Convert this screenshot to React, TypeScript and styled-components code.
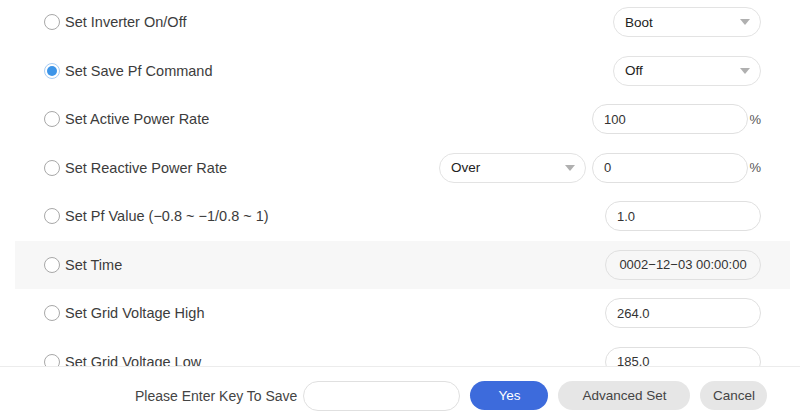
import React, { useState } from "react";
import styled, { createGlobalStyle } from "styled-components";

const GlobalStyle = createGlobalStyle`
  html, body {
    margin: 0;
    padding: 0;
    background: #fff;
    font-family: "Liberation Sans", Arial, sans-serif;
    color: #333;
  }
  * { box-sizing: border-box; }
`;

// ─── Styled Components ────────────────────────────────────────────────────────

const Page = styled.div`
  width: 800px;
  height: 418px;
  display: flex;
  flex-direction: column;
  overflow: hidden;
`;

const ScrollArea = styled.div`
  height: 366px;
  flex-shrink: 0;
  overflow: hidden;
  padding: 0 10px 0 15px;
`;

const List = styled.div`
  margin-top: -2px;
  display: flex;
  flex-direction: column;
`;

const Row = styled.div<{ $shaded?: boolean }>`
  height: 48.5px;
  flex-shrink: 0;
  display: flex;
  align-items: center;
  padding: 0 29px;
  background: ${(p) => (p.$shaded ? "#f7f7f7" : "transparent")};
`;

const Label = styled.label`
  flex: 1;
  display: flex;
  align-items: center;
  gap: 5px;
  font-size: 14.5px;
  color: #3c3c3c;
  cursor: pointer;
  white-space: nowrap;
`;

const Radio = styled.span<{ $checked?: boolean }>`
  width: 16px;
  height: 16px;
  border-radius: 50%;
  border: 1.5px solid ${(p) => (p.$checked ? "#a9cdf3" : "#a8a8a8")};
  background: #fff;
  display: flex;
  align-items: center;
  justify-content: center;

  &::after {
    content: "";
    width: 10px;
    height: 10px;
    border-radius: 50%;
    background: #3d95e8;
    display: ${(p) => (p.$checked ? "block" : "none")};
  }
`;

const Controls = styled.div`
  display: flex;
  align-items: center;
  gap: 6px;
`;

const Select = styled.div<{ $width: number }>`
  width: ${(p) => p.$width}px;
  height: 30px;
  border: 1px solid #e3e3e3;
  border-radius: 15px;
  background: #fff;
  display: flex;
  align-items: center;
  justify-content: space-between;
  padding: 0 10px 0 11px;
  font-size: 13.5px;
  color: #222;
`;

const Caret = styled.span`
  width: 0;
  height: 0;
  border-left: 5.5px solid transparent;
  border-right: 5.5px solid transparent;
  border-top: 6px solid #b0b0b0;
`;

const Field = styled.div<{ $centered?: boolean; $muted?: boolean }>`
  width: 156px;
  height: 30px;
  border: 1px solid #e0e0e0;
  border-radius: 15px;
  background: ${(p) => (p.$muted ? "#f7f7f7" : "#fff")};
  display: flex;
  align-items: center;
  justify-content: ${(p) => (p.$centered ? "center" : "flex-start")};
  padding: 0 11px;
  font-size: 13px;
  color: #333;
`;

const Unit = styled.span`
  width: 13px;
  margin-left: -6px;
  font-size: 13px;
  color: #555;
  text-align: right;
`;

const Footer = styled.div`
  flex: 1;
  border-top: 1px solid #ececec;
  display: flex;
  align-items: center;
  padding: 6px 33px 0 135px;
  gap: 10px;
`;

const FooterLabel = styled.span`
  flex-shrink: 0;
  white-space: nowrap;
  font-size: 14px;
  color: #444;
  margin-right: -4px;
`;

const KeyInput = styled.input`
  flex-shrink: 0;
  width: 157px;
  height: 30px;
  border: 1px solid #e0e0e0;
  border-radius: 15px;
  outline: none;
  padding: 0 12px;
  font-family: inherit;
`;

const Button = styled.button<{ $primary?: boolean; $width: number }>`
  flex-shrink: 0;
  width: ${(p) => p.$width}px;
  height: 29px;
  border: none;
  border-radius: 15px;
  background: ${(p) => (p.$primary ? "#3d6bdc" : "#e6e6e6")};
  color: ${(p) => (p.$primary ? "#fff" : "#444")};
  font-family: "Liberation Sans", Arial, sans-serif;
  font-size: 13.5px;
  cursor: pointer;
`;

// ─── Data ─────────────────────────────────────────────────────────────────────

type Control =
  | { kind: "select"; value: string; width: number }
  | { kind: "field"; value: string; unit?: boolean; centered?: boolean; muted?: boolean };

interface Item {
  label: string;
  controls: Control[];
  shaded?: boolean;
}

const items: Item[] = [
  { label: "Set Inverter On/Off", controls: [{ kind: "select", value: "Boot", width: 148 }] },
  { label: "Set Save Pf Command", controls: [{ kind: "select", value: "Off", width: 148 }] },
  { label: "Set Active Power Rate", controls: [{ kind: "field", value: "100", unit: true }] },
  {
    label: "Set Reactive Power Rate",
    controls: [
      { kind: "select", value: "Over", width: 147 },
      { kind: "field", value: "0", unit: true },
    ],
  },
  { label: "Set Pf Value (−0.8 ~ −1/0.8 ~ 1)", controls: [{ kind: "field", value: "1.0" }] },
  {
    label: "Set Time",
    shaded: true,
    controls: [{ kind: "field", value: "0002−12−03 00:00:00", centered: true, muted: true }],
  },
  { label: "Set Grid Voltage High", controls: [{ kind: "field", value: "264.0" }] },
  { label: "Set Grid Voltage Low", controls: [{ kind: "field", value: "185.0" }] },
];

// ─── Component ────────────────────────────────────────────────────────────────

export default function App() {
  const [selected, setSelected] = useState(1);

  return (
    <>
      <GlobalStyle />
      <Page>
        <ScrollArea>
          <List>
            {items.map((item, i) => (
              <Row key={item.label} $shaded={item.shaded}>
                <Label onClick={() => setSelected(i)}>
                  <Radio $checked={selected === i} />
                  {item.label}
                </Label>
                <Controls>
                  {item.controls.map((c, j) =>
                    c.kind === "select" ? (
                      <Select key={j} $width={c.width}>
                        {c.value}
                        <Caret />
                      </Select>
                    ) : (
                      <React.Fragment key={j}>
                        <Field $centered={c.centered} $muted={c.muted}>
                          {c.value}
                        </Field>
                        {c.unit && <Unit>%</Unit>}
                      </React.Fragment>
                    )
                  )}
                </Controls>
              </Row>
            ))}
          </List>
        </ScrollArea>

        <Footer>
          <FooterLabel>Please Enter Key To Save</FooterLabel>
          <KeyInput />
          <Button $primary $width={78}>Yes</Button>
          <Button $width={132}>Advanced Set</Button>
          <Button $width={67}>Cancel</Button>
        </Footer>
      </Page>
    </>
  );
}
